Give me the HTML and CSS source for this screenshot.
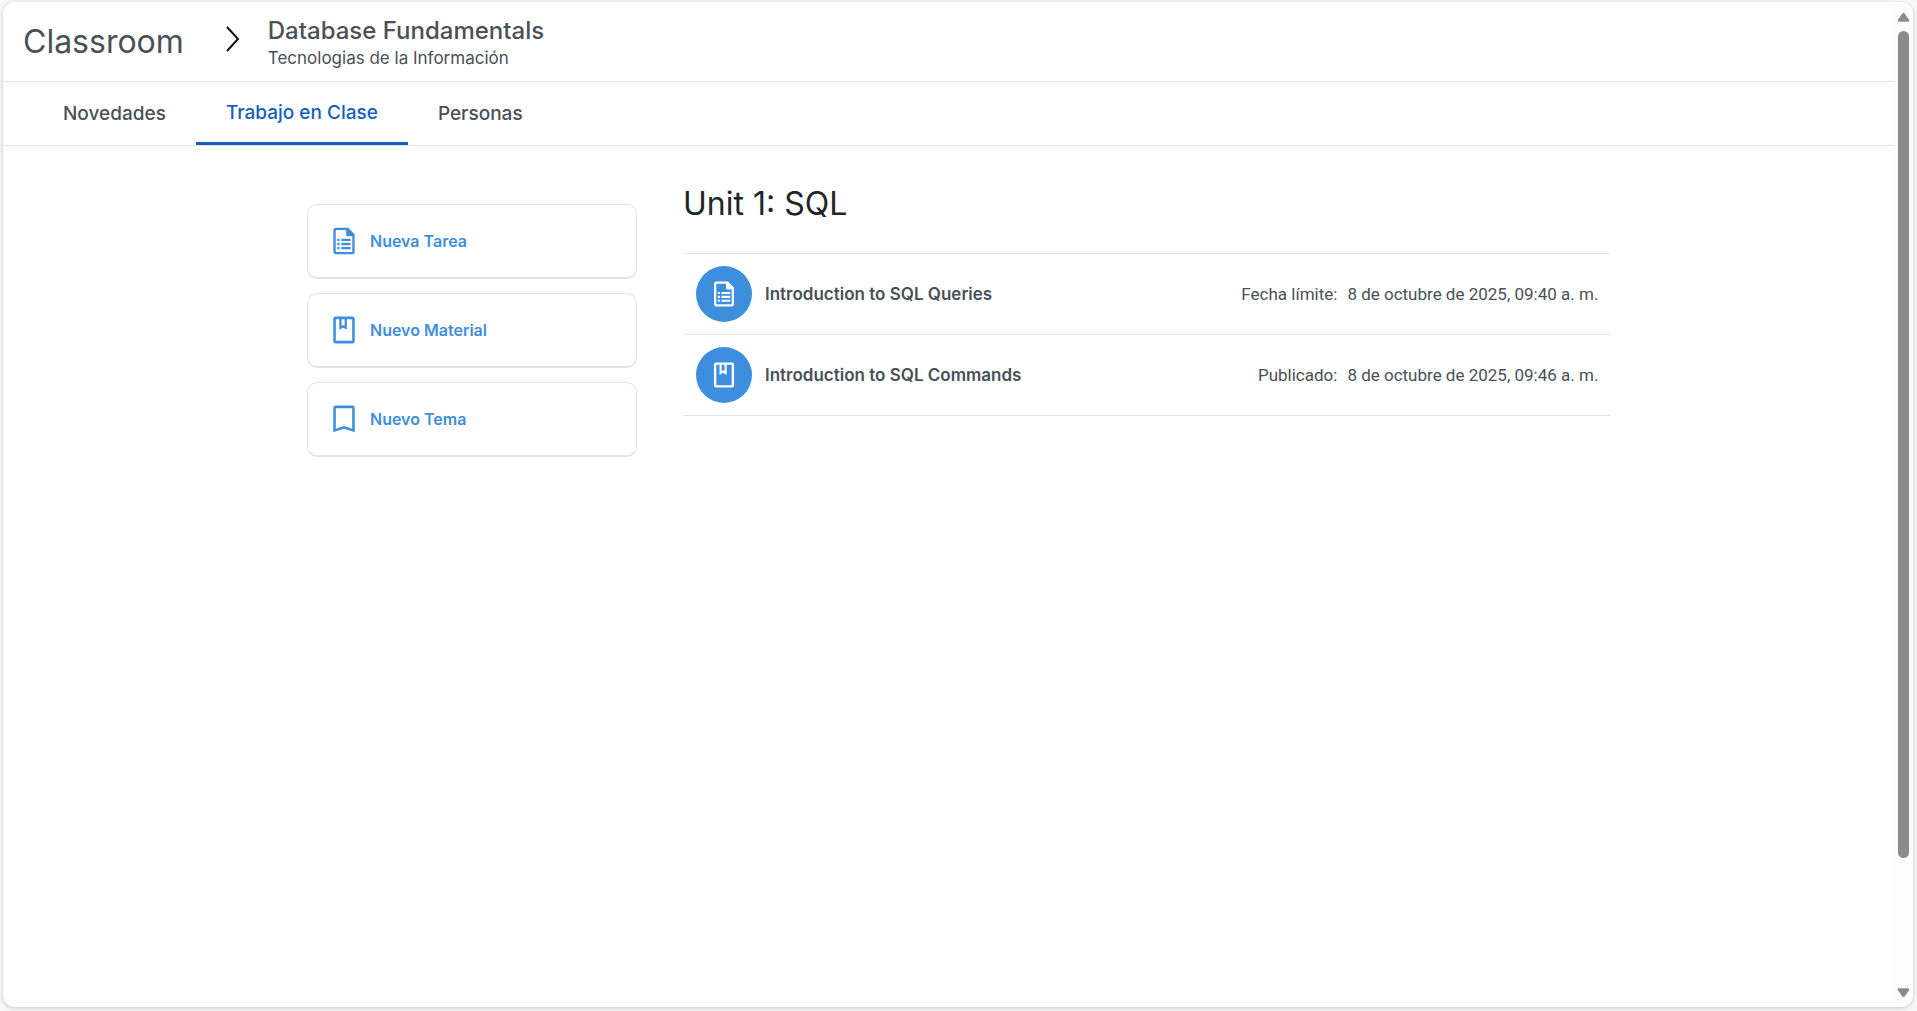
FILE: index.html
```html
<!DOCTYPE html>
<html lang="es">
<head>
<meta charset="utf-8">
<meta name="viewport" content="width=device-width, initial-scale=1">
<title>Classroom - Database Fundamentals</title>
<link rel="stylesheet" href="styles.css">
</head>
<body>
<svg class="symbols" aria-hidden="true">
  <symbol id="icon-task" viewBox="0 0 24 24">
    <path fill="none" stroke="currentColor" stroke-width="1.8" stroke-linejoin="round" d="M6 2.9h8.700l4.400 4.400V20a1.100 1.100 0 0 1-1.100 1.100H6A1.100 1.100 0 0 1 4.900 20V4A1.100 1.100 0 0 1 6 2.900zM14.600 3v4.500h4.400"/>
    <path fill="currentColor" d="M14 2.500v5.500h5.500zM7 10.300h1.700v1.700H7zm3 0h7v1.700h-7zM7 13.400h1.700v1.700H7zm3 0h7v1.700h-7zM7 16.500h1.700v1.700H7zm3 0h7v1.700h-7z"/>
  </symbol>
  <symbol id="icon-book" viewBox="0 0 24 24">
    <path fill="none" stroke="currentColor" stroke-width="1.9" stroke-linejoin="round" d="M5.600 2.900h12.800a.7.7 0 0 1 .7.7v16.800a.7.7 0 0 1-.7.7H5.600a.7.7 0 0 1-.7-.7V3.600a.7.7 0 0 1 .7-.7z"/>
    <path fill="none" stroke="currentColor" stroke-width="1.700" d="M9.300 3v7.400l2-1.200 2 1.200V3"/>
  </symbol>
  <symbol id="icon-bookmark" viewBox="0 0 24 24">
    <path fill="none" stroke="currentColor" stroke-width="1.9" d="M5.600 2.900h12.800a.7.7 0 0 1 .7.7v17L12 18.200l-7.100 2.400v-17a.7.7 0 0 1 .7-.7z"/>
  </symbol>
</svg>
<div class="window">
  <div class="page">
    <header class="header">
      <a class="brand" href="#">Classroom</a>
      <svg class="chevron" viewBox="0 0 14 26" aria-hidden="true"><path fill="none" stroke="currentColor" stroke-width="2" d="M1 1l11 12L1 25"/></svg>
      <div class="course">
        <h1 class="course-name">Database Fundamentals</h1>
        <p class="course-area">Tecnologias de la Información</p>
      </div>
    </header>
    <nav class="tabs">
      <a class="tab" href="#">Novedades</a>
      <a class="tab tab-active" href="#" aria-current="page">Trabajo en Clase</a>
      <a class="tab" href="#">Personas</a>
    </nav>
    <main class="content">
      <div class="actions">
        <button class="action" type="button"><svg class="action-icon" aria-hidden="true"><use href="#icon-task"/></svg>Nueva Tarea</button>
        <button class="action" type="button"><svg class="action-icon" aria-hidden="true"><use href="#icon-book"/></svg>Nuevo Material</button>
        <button class="action" type="button"><svg class="action-icon" aria-hidden="true"><use href="#icon-bookmark"/></svg>Nuevo Tema</button>
      </div>
      <section class="unit">
        <h2 class="unit-title">Unit 1: SQL</h2>
        <ul class="items">
          <li class="item">
            <span class="badge"><svg class="badge-icon" aria-hidden="true"><use href="#icon-task"/></svg></span>
            <span class="item-title">Introduction to SQL Queries</span>
            <span class="item-date"><span>Fecha límite:</span><span>8 de octubre de 2025, 09:40 a. m.</span></span>
          </li>
          <li class="item">
            <span class="badge"><svg class="badge-icon" aria-hidden="true"><use href="#icon-book"/></svg></span>
            <span class="item-title">Introduction to SQL Commands</span>
            <span class="item-date"><span>Publicado:</span><span>8 de octubre de 2025, 09:46 a. m.</span></span>
          </li>
        </ul>
      </section>
    </main>
  </div>
  <div class="scrollbar" aria-hidden="true">
    <svg class="arrow" viewBox="0 0 14 10"><path fill="currentColor" d="M6 1q1-1 2 0l5 7q1 2-1 2H2q-2 0-1-2z"/></svg>
    <div class="track"><div class="thumb"></div></div>
    <svg class="arrow" viewBox="0 0 14 10"><path fill="currentColor" d="M6 9q1 1 2 0l5-7q1-2-1-2H2Q0 0 1 2z"/></svg>
  </div>
</div>
</body>
</html>
```
FILE: styles.css
```css
* {
  box-sizing: border-box;
}

body {
  margin: 0;
  padding: 2px 4px 4px 3px;
  height: 100vh;
  background: #f7f7f7;
  color: #495057;
  font-family: Inter, "Liberation Sans", sans-serif;
}

h1, h2, p, ul {
  margin: 0;
  padding: 0;
}

a {
  color: inherit;
  text-decoration: none;
}

.symbols {
  display: none;
}

.window {
  display: flex;
  height: 100%;
  overflow: hidden;
  border-radius: 12px;
  background: #fff;
  box-shadow: 0 1px 4px rgba(0, 0, 0, 0.2);
}

.page {
  flex: 1;
  min-width: 0;
}

.header {
  display: flex;
  align-items: center;
  height: 80px;
  padding: 0 20px;
  border-bottom: 1px solid #e4e4e4;
}

.brand {
  font-size: 32px;
  line-height: 40px;
}

.chevron {
  width: 14px;
  height: 26px;
  margin: 0 28px 5px 42px;
  color: #111;
}

.course-name {
  font-size: 24px;
  font-weight: 500;
  line-height: 32px;
}

.course-area {
  font-size: 17px;
  line-height: 22px;
}

.tabs {
  display: flex;
  height: 64px;
  padding-left: 30px;
  border-bottom: 1px solid #e4e4e4;
}

.tab {
  display: flex;
  align-items: center;
  padding: 0 30px;
  font-size: 19px;
  font-weight: 500;
}

.tab-active {
  border-bottom: 3px solid #1560bd;
  color: #1560bd;
}

.content {
  display: grid;
  grid-template-columns: 330px 1fr;
  gap: 46px;
  padding: 30px 15% 30px 304px;
}

.actions {
  display: flex;
  flex-direction: column;
  gap: 14px;
  padding-top: 28px;
}

.action {
  display: flex;
  align-items: center;
  gap: 10px;
  height: 75px;
  padding: 0 20px;
  border: 1px solid #e4e4e4;
  border-bottom-width: 2px;
  border-radius: 10px;
  background: #fff;
  color: #3e8ede;
  font: 600 16px Inter, "Liberation Sans", sans-serif;
}

.action-icon {
  width: 32px;
  height: 32px;
}

.unit-title {
  padding: 8px 0 29px;
  color: #212529;
  font-size: 32px;
  font-weight: 400;
  line-height: 40px;
}

.items {
  border-top: 1px solid #e4e4e4;
  list-style: none;
}

.item {
  display: flex;
  align-items: center;
  gap: 13px;
  height: 81px;
  padding: 0 12px 0 13px;
  border-bottom: 1px solid #e4e4e4;
}

.badge {
  display: grid;
  place-items: center;
  width: 56px;
  height: 56px;
  border-radius: 50%;
  background: #3e8ede;
  color: #fff;
}

.badge-icon {
  width: 30px;
  height: 30px;
}

.item-title {
  font-size: 17px;
  font-weight: 600;
}

.item-date {
  display: flex;
  gap: 10px;
  margin-left: auto;
  font-family: Roboto, "Liberation Sans", sans-serif;
  font-size: 17px;
}

.scrollbar {
  display: flex;
  flex-direction: column;
  align-items: center;
  width: 19px;
  padding: 10px 3px 9px 2px;
  background: #fcfcfc;
  color: #8b8b8b;
}

.arrow {
  width: 13px;
  height: 10px;
}

.track {
  flex: 1;
  padding: 9px 0 6px;
}

.thumb {
  width: 11px;
  height: 87%;
  border-radius: 6px;
  background: #8b8b8b;
}
```
